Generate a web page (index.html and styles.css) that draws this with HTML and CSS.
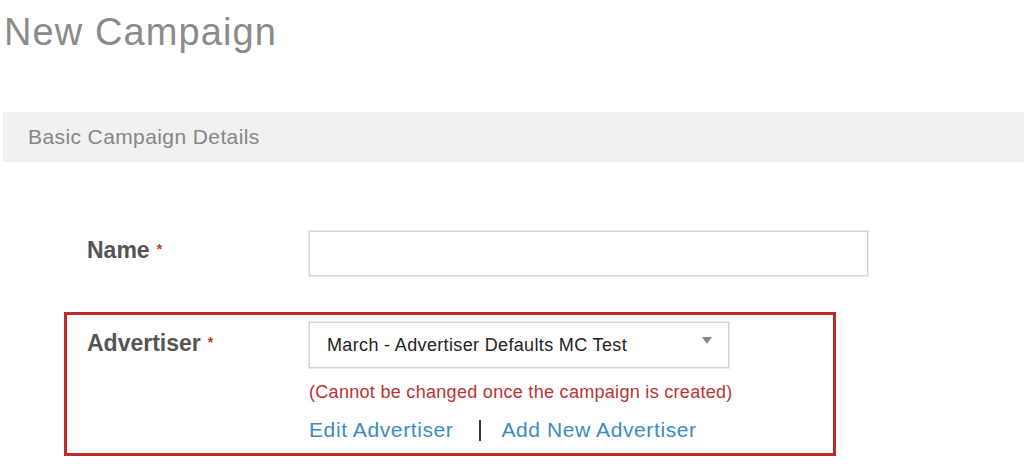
FILE: index.html
```html
<!DOCTYPE html>
<html>
<head>
<meta charset="utf-8">
<link rel="stylesheet" href="styles.css">
</head>
<body>
<h1 class="title">New Campaign</h1>
<div class="section-bar">Basic Campaign Details</div>
<div class="form">
  <div class="row row-name">
    <label class="label label-name">Name<span class="req">*</span></label>
    <div class="field"><div class="text-input"></div></div>
  </div>
  <div class="adv-box">
    <div class="row">
      <label class="label label-adv">Advertiser<span class="req">*</span></label>
      <div class="field">
        <div class="select"><span class="select-text">March - Advertiser Defaults MC Test</span><span class="caret"></span></div>
        <div class="note">(Cannot be changed once the campaign is created)</div>
        <div class="links"><a class="link">Edit Advertiser</a><span class="sep"></span><a class="link">Add New Advertiser</a></div>
      </div>
    </div>
  </div>
</div>
</body>
</html>
```
FILE: styles.css
```css
html, body {
  margin: 0;
  padding: 0;
  background: #ffffff;
}
body {
  font-family: "Liberation Sans", Arial, sans-serif;
  width: 1024px;
  height: 464px;
  overflow: hidden;
}
.title {
  margin: 0;
  padding: 12px 0 0 4px;
  height: 40px;
  font-size: 38px;
  line-height: 40px;
  font-weight: normal;
  letter-spacing: 1.1px;
  color: #8b8b8b;
}
.section-bar {
  margin: 60px 0 0 3px;
  height: 50px;
  background: #f1f1f1;
  display: flex;
  align-items: center;
  padding-left: 25px;
  font-size: 21px;
  letter-spacing: 0.4px;
  color: #868686;
}
.form {
  padding-left: 64px;
}
.row {
  display: grid;
  grid-template-columns: 222px 1fr;
}
.row-name {
  margin-top: 69px;
  padding-left: 23px;
}
.label {
  font-size: 23px;
  font-weight: bold;
  color: #555555;
}
.label-name {
  line-height: 36px;
}
.label-adv {
  line-height: 40px;
}
.req {
  color: #c0392b;
  font-size: 14px;
  font-weight: bold;
  margin-left: 7px;
  vertical-align: 4px;
}
.text-input {
  width: 559px;
  height: 45px;
  box-sizing: border-box;
  border: 1px solid #d3d3d3;
  box-shadow: 0 0 0 1px #ececec;
  background: #fff;
}
.adv-box {
  margin-top: 36px;
  width: 772px;
  box-sizing: border-box;
  border: 3px solid #bd2b2b;
  padding: 7px 0 10px 20px;
}
.select {
  position: relative;
  width: 420px;
  height: 46px;
  box-sizing: border-box;
  border: 1px solid #d3d3d3;
  box-shadow: 0 0 0 1px #ececec;
  display: flex;
  align-items: center;
  padding-left: 17px;
  font-size: 18px;
  letter-spacing: 0.35px;
  color: #222222;
}
.caret {
  position: absolute;
  right: 16px;
  top: 14px;
  width: 0;
  height: 0;
  border-left: 5.5px solid transparent;
  border-right: 5.5px solid transparent;
  border-top: 7px solid #8a8a8a;
}
.note {
  margin-top: 12px;
  font-size: 18px;
  line-height: 24px;
  letter-spacing: 0.3px;
  color: #b93434;
}
.links {
  margin-top: 13px;
  display: flex;
  align-items: center;
  font-size: 21px;
  line-height: 26px;
  letter-spacing: 0.6px;
}
.link {
  color: #3b8cc0;
  cursor: pointer;
}
.sep {
  display: inline-block;
  width: 0;
  height: 21px;
  border-left: 2px solid #3a3a3a;
  margin: 0 20px 0 26px;
}
```
